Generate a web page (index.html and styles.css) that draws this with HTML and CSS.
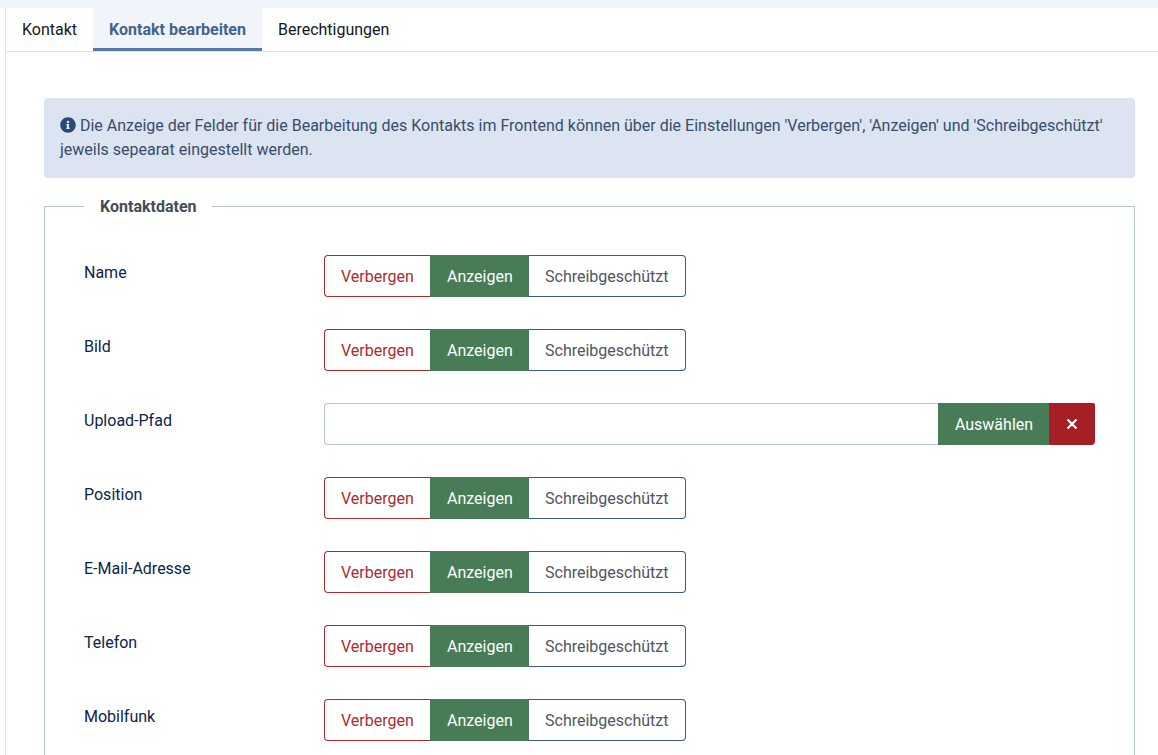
FILE: index.html
```html
<!DOCTYPE html>
<html lang="de">
<head>
<meta charset="utf-8">
<title>Kontakt bearbeiten</title>
<link rel="stylesheet" href="styles.css">
</head>
<body>
<div class="topband"></div>
<main class="shell">
  <nav class="tabs">
    <button class="tab">Kontakt</button>
    <button class="tab tab-active">Kontakt bearbeiten</button>
    <button class="tab">Berechtigungen</button>
  </nav>
  <section class="panel">
    <div class="alert">
      <svg class="info" viewBox="0 0 512 512" aria-hidden="true"><path d="M256 8C119 8 8 119 8 256s111 248 248 248 248-111 248-248S393 8 256 8zm0 110c23.200 0 42 18.800 42 42s-18.800 42-42 42-42-18.800-42-42 18.800-42 42-42zm56 254c0 6.600-5.400 12-12 12h-88c-6.600 0-12-5.400-12-12v-24c0-6.600 5.400-12 12-12h12v-64h-12c-6.600 0-12-5.400-12-12v-24c0-6.600 5.400-12 12-12h64c6.600 0 12 5.400 12 12v100h12c6.600 0 12 5.400 12 12v24z"/></svg>
      Die Anzeige der Felder für die Bearbeitung des Kontakts im Frontend können über die Einstellungen 'Verbergen', 'Anzeigen' und 'Schreibgeschützt' jeweils sepearat eingestellt werden.
    </div>
    <fieldset class="group">
      <legend class="group-title">Kontaktdaten</legend>
      <div class="row">
        <div class="label">Name</div>
        <div class="switch"><span class="opt opt-hide">Verbergen</span><span class="opt opt-show">Anzeigen</span><span class="opt opt-ro">Schreibgeschützt</span></div>
      </div>
      <div class="row">
        <div class="label">Bild</div>
        <div class="switch"><span class="opt opt-hide">Verbergen</span><span class="opt opt-show">Anzeigen</span><span class="opt opt-ro">Schreibgeschützt</span></div>
      </div>
      <div class="row">
        <div class="label">Upload-Pfad</div>
        <div class="picker">
          <div class="picker-input"></div>
          <button class="picker-select">Auswählen</button>
          <button class="picker-clear"><svg class="clear-icon" viewBox="0 0 12 12" aria-hidden="true"><path d="M1.500 1.500l9 9M10.500 1.500l-9 9"/></svg></button>
        </div>
      </div>
      <div class="row">
        <div class="label">Position</div>
        <div class="switch"><span class="opt opt-hide">Verbergen</span><span class="opt opt-show">Anzeigen</span><span class="opt opt-ro">Schreibgeschützt</span></div>
      </div>
      <div class="row">
        <div class="label">E-Mail-Adresse</div>
        <div class="switch"><span class="opt opt-hide">Verbergen</span><span class="opt opt-show">Anzeigen</span><span class="opt opt-ro">Schreibgeschützt</span></div>
      </div>
      <div class="row">
        <div class="label">Telefon</div>
        <div class="switch"><span class="opt opt-hide">Verbergen</span><span class="opt opt-show">Anzeigen</span><span class="opt opt-ro">Schreibgeschützt</span></div>
      </div>
      <div class="row">
        <div class="label">Mobilfunk</div>
        <div class="switch"><span class="opt opt-hide">Verbergen</span><span class="opt opt-show">Anzeigen</span><span class="opt opt-ro">Schreibgeschützt</span></div>
      </div>
    </fieldset>
  </section>
</main>
</body>
</html>
```
FILE: styles.css
```css
* { box-sizing: border-box; }
html, body { margin: 0; height: 755px; overflow: hidden; background: #fff; }
body { font: 400 16px/24px Roboto, sans-serif; color: #0c2549; }
.topband { height: 8px; background: #f0f4fb; }
.shell { margin-left: 5px; border-left: 1px solid #dfe3e7; }
.tabs { display: flex; height: 44px; border-bottom: 1px solid #dfe3e7; }
.tab { font: inherit; color: #15171a; background: none; border: 0; padding: 0 16px; height: 43px; }
.tab-active { color: #426491; font-weight: 700; background: #f1f4f8; box-shadow: inset 0 -3px 0 #587ba6; height: 43px; }
.panel { padding: 46px 23px 0 38px; }
.alert { background: #dce4f1; color: #384d6c; padding: 16px; border-radius: 4px; margin-bottom: 16px; }
.info { width: 16px; height: 16px; fill: #2a4a73; vertical-align: -2px; }
.group { margin: 0; padding: 36px 39px 0; border: 1px solid #b9c6d6; min-width: 0; }
.group-title { margin-left: 0; padding: 1px 15px 0 16px; font-weight: 700; color: #454d57; }
.row { display: flex; margin-bottom: 32px; }
.label { width: 240px; padding-top: 6px; color: #0c2549; }
.switch { display: flex; height: 42px; }
.opt { display: flex; align-items: center; padding: 2px 16px 0; border: 1px solid; background: #fff; }
.opt-hide { color: #ad2a2f; border-color: #ad2a2f; border-right: 0; border-radius: 4px 0 0 4px; width: 106px; }
.opt-show { color: #fff; background: #477c56; border-color: #477c56; width: 99px; }
.opt-ro { color: #50565e; border-color: #3d5c85; border-left: 0; border-radius: 0 4px 4px 0; width: 157px; }
.picker { display: flex; flex: 1; height: 42px; }
.picker-input { flex: 1; border: 1px solid #b9c6d6; border-right: 0; border-radius: 4px 0 0 4px; }
.picker-select { font: inherit; color: #fff; background: #477c56; border: 0; width: 111px; padding: 2px 0 0 1px; }
.picker-clear { display: flex; align-items: center; justify-content: center; background: #a51f24; border: 0; width: 46px; padding: 0; border-radius: 0 2px 4px 0; }
.clear-icon { width: 12px; height: 12px; fill: none; stroke: #fff; stroke-width: 2.200; }
```
